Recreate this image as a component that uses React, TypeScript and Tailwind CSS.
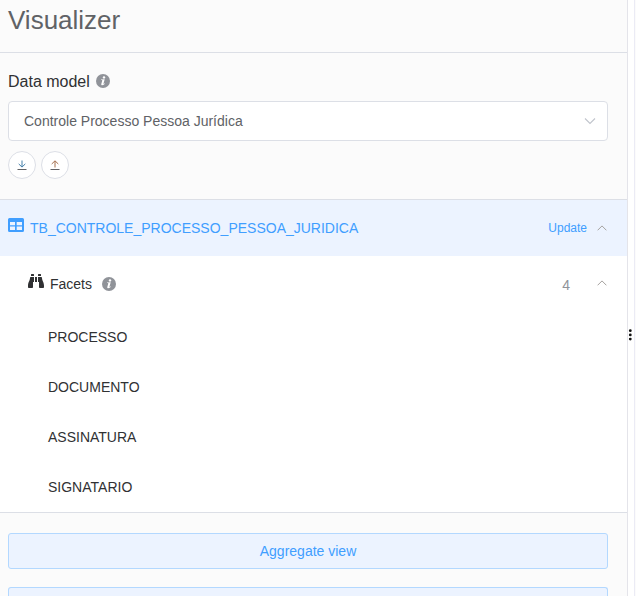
import React from "react";
import { FaBinoculars } from "react-icons/fa";

function InfoIcon() {
  return (
    <svg viewBox="0 0 14 14" className="h-[14px] w-[14px] shrink-0">
      <circle cx="7" cy="7" r="7" fill="#909399" />
      <circle cx="8" cy="3.4" r="1.2" fill="#fff" />
      <path d="M5 5.500 8.700 5.200 7.500 9.600c-.1.6.3.5 1.100-.3l.3.3C7.700 11.700 4.900 12 5.300 9.900L6.200 6.700c.1-.5-.2-.6-1.200-.6z" fill="#fff" />
    </svg>
  );
}

function TableIcon() {
  return (
    <svg viewBox="0 0 16 14" className="h-[14px] w-4 shrink-0" fillRule="evenodd">
      <path
        d="M1.500 0h13A1.500 1.500 0 0 1 16 1.500v11a1.500 1.500 0 0 1-1.500 1.500h-13A1.500 1.500 0 0 1 0 12.500v-11A1.500 1.500 0 0 1 1.500 0zM2 4v3.300h5V4zM8.700 4v3.300h5.300V4zM2 8.500v3.500h5V8.500zM8.700 8.500v3.500h5.300V8.500z"
        fill="#409eff"
      />
    </svg>
  );
}

function Chevron({ down = false }: { down?: boolean }) {
  return down ? (
    <svg viewBox="0 0 12 8" className="h-2 w-3" fill="none" stroke="#c0c4cc" strokeWidth="1.1">
      <path d="M1 1.500 6 6.500 11 1.500" />
    </svg>
  ) : (
    <svg viewBox="0 0 10 6" className="h-[6px] w-[10px]" fill="none" stroke="#a5a29f" strokeWidth="1">
      <path d="M.6 5.300 5 .9 9.400 5.300" />
    </svg>
  );
}

function RoundButton({ up = false }: { up?: boolean }) {
  return (
    <button className="flex h-7 w-7 items-center justify-center rounded-full border border-[#dcdfe6] bg-white">
      <svg viewBox="0 0 12 12" className="h-3 w-3" fill="none" stroke="#606266" strokeWidth="1">
        <path d="M1.500 10.500h9" />
        {up ? (
          <path d="M6 8.500V2M2.700 5 6 1.800 9.300 5" stroke="#a5704f" />
        ) : (
          <path d="M6 1.500V8M2.700 4.900 6 8.100 9.300 4.900" stroke="#4580aa" />
        )}
      </svg>
    </button>
  );
}

const facets = ["PROCESSO", "DOCUMENTO", "ASSINATURA", "SIGNATARIO"];

export default function App() {
  return (
    <div className="flex h-[596px] w-[636px] overflow-hidden bg-white font-['Liberation_Sans',Arial,sans-serif] text-sm text-[#303133]">
      <main className="w-[628px] shrink-0 border-r border-[#e4e4ea] bg-[#fbfbfb]">
        <header className="h-[53px] border-b border-[#dcdfe6] pl-2">
          <h1 className="pt-px text-[26px] leading-[38px] text-[#606266]">Visualizer</h1>
        </header>
        <section className="h-[147px] border-b border-[#dcdfe6] pr-[19px] pl-2">
          <div className="flex h-12 items-center gap-1.5 pt-2.5 text-base">
            <span>Data model</span>
            <div className="pb-0.5"><InfoIcon /></div>
          </div>
          <div className="flex h-10 items-center justify-between rounded border border-[#dcdfe6] bg-white pr-[11px] pl-[15px] text-[#606266]">
            <span>Controle Processo Pessoa Jurídica</span>
            <Chevron down />
          </div>
          <div className="mt-2.5 flex gap-[5px]">
            <RoundButton />
            <RoundButton up />
          </div>
        </section>
        <section className="border-b border-[#dcdfe6] bg-white">
          <div className="flex h-14 items-center bg-[#ecf3ff] pr-5 pl-2 text-[#409eff]">
            <div className="pb-[6px]"><TableIcon /></div>
            <span className="ml-1.5">TB_CONTROLE_PROCESSO_PESSOA_JURIDICA</span>
            <span className="mr-[10px] ml-auto text-xs">Update</span>
            <div className="pb-px"><Chevron /></div>
          </div>
          <div className="flex h-14 items-center pr-5 pl-7">
            <FaBinoculars className="mb-[7px] h-4 w-4" />
            <span className="mr-[10px] ml-1.5">Facets</span>
            <InfoIcon />
            <span className="mr-[27px] ml-auto pt-0.5 text-[#909399]">4</span>
            <div className="pb-0.5"><Chevron /></div>
          </div>
          {facets.map((name) => (
            <div key={name} className="flex h-[50px] items-center pl-12">{name}</div>
          ))}
        </section>
        <section className="flex flex-col gap-[18px] px-2 pt-5 pr-[19px]">
          <button className="h-9 rounded-[3px] border border-[#b3d8ff] bg-[#ecf3ff] text-[#409eff]">Aggregate view</button>
          <div className="h-[9px] rounded-t-[3px] border border-b-0 border-[#b3d8ff] bg-[#ecf3ff]" />
        </section>
      </main>
      <div className="w-[7px] shrink-0 border-r border-[#ebebf5] bg-white pt-[329px]">
        <svg viewBox="0 0 4 12" className="h-3 w-1" fill="#111">
          <circle cx="2.300" cy="1.700" r="1.400" />
          <circle cx="2.300" cy="5.900" r="1.400" />
          <circle cx="2.300" cy="10.100" r="1.400" />
        </svg>
      </div>
      <div className="flex-1 bg-[#fbfbfb]" />
    </div>
  );
}
